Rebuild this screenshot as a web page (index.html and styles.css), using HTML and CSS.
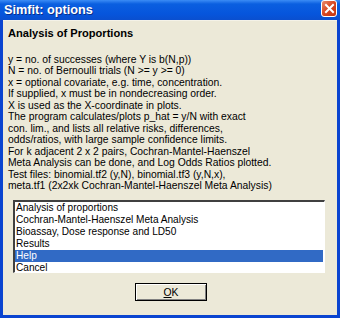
FILE: index.html
```html
<!DOCTYPE html>
<html lang="en">
<head>
  <meta charset="UTF-8" />
  <title>Simfit: options</title>
  <link rel="stylesheet" href="styles.css">
</head>
<body>
  <div class="window">
    <div class="titlebar">
      <span class="title">Simfit: options</span>
      <span class="close">
        <svg width="11" height="11" viewBox="0 0 11 11">
          <path d="M2 2 L9 9 M9 2 L2 9" stroke="#fff" stroke-width="2" stroke-linecap="square" />
        </svg>
      </span>
    </div>

    <div class="content">
      <h3 class="heading">Analysis of Proportions</h3>
      <div class="info">
        <div>y = no. of successes (where Y is b(N,p))</div>
        <div>N = no. of Bernoulli trials (N &gt;= y &gt;= 0)</div>
        <div>x = optional covariate, e.g. time, concentration.</div>
        <div>If supplied, x must be in nondecreasing order.</div>
        <div>X is used as the X-coordinate in plots.</div>
        <div>The program calculates/plots p_hat = y/N with exact</div>
        <div>con. lim., and lists all relative risks, differences,</div>
        <div>odds/ratios, with large sample confidence limits.</div>
        <div>For k adjacent 2 x 2 pairs, Cochran-Mantel-Haenszel</div>
        <div>Meta Analysis can be done, and Log Odds Ratios plotted.</div>
        <div>Test files: binomial.tf2 (y,N), binomial.tf3 (y,N,x),</div>
        <div>meta.tf1 (2x2xk Cochran-Mantel-Haenszel Meta Analysis)</div>
      </div>

      <ul class="options">
        <li>Analysis of proportions</li>
        <li>Cochran-Mantel-Haenszel Meta Analysis</li>
        <li>Bioassay, Dose response and LD50</li>
        <li>Results</li>
        <li class="selected">Help</li>
        <li>Cancel</li>
      </ul>

      <div class="actions">
        <button class="ok"><u>O</u>K</button>
      </div>
    </div>
  </div>
</body>
</html>
```

FILE: styles.css
```css
body {
  margin: 0;
  font-family: 'Liberation Sans', Arial, sans-serif;
  font-size: 10.35px;
  color: #000;
  background-color: #ece9d8;
}
.window {
  width: 340px;
  height: 318px;
  box-sizing: border-box;
  background-color: #ece9d8;
  border-left: 3px solid #0a44d0;
  border-right: 3px solid #0a44d0;
  border-bottom: 3px solid #0a44d0;
  display: flex;
  flex-direction: column;
}
.titlebar {
  height: 20px;
  margin: 0 -3px;
  padding: 0 3px 0 4px;
  background: linear-gradient(#3b8cf5 0%, #0a5fe0 20%, #0655dc 70%, #0a4fcf 100%);
  display: flex;
  align-items: center;
  justify-content: space-between;
}
.title {
  color: #fff;
  font-weight: bold;
  font-size: 12.7px;
  text-shadow: 1px 1px 0 #0a2f8a;
}
.close {
  width: 14px;
  height: 15px;
  margin-top: -3px;
  background: linear-gradient(135deg, #e88a6e, #d8461f 50%, #c23510);
  border: 1px solid #fff;
  border-radius: 3px;
  display: flex;
  align-items: center;
  justify-content: center;
}
.content {
  flex: 1;
  padding: 0 5px 0 5px;
  border-top: 1px solid #f4f2e8;
}
.heading {
  margin: 5px 0 0 0;
  font-size: 11.1px;
  line-height: 15px;
}
.info {
  margin-top: 13px;
  line-height: 11.45px;
}
.options {
  list-style: none;
  margin: 9px 0 0 5px;
  padding: 0;
  width: 312px;
  height: 73px;
  box-sizing: border-box;
  font-size: 10.1px;
  background-color: #fff;
  border-top: 2px solid #404040;
  border-left: 2px solid #404040;
  border-right: 1px solid #fff;
  border-bottom: 1px solid #fff;
  box-shadow: 1px 1px 0 #ece9d8;
}
.options li {
  height: 12px;
  line-height: 12px;
  padding-left: 1px;
  margin-right: 1px;
}
.options li.selected {
  background-color: #316ac5;
  color: #fff;
}
.actions {
  display: flex;
  justify-content: center;
  margin-top: 10px;
}
.ok {
  width: 72px;
  height: 18px;
  margin-left: 2px;
  padding: 0;
  font-family: 'Liberation Sans', Arial, sans-serif;
  font-size: 10.35px;
  background-color: #ece9d8;
  border: 1px solid #000;
  box-shadow: inset 1px 1px 0 #fff, inset -1px -1px 0 #808080;
}
```
